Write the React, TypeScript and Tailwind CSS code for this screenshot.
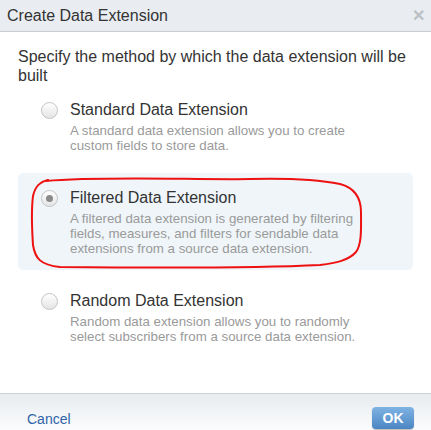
import React from 'react';

type Option = {
  title: string;
  desc: string;
  checked?: boolean;
};

const options: Option[] = [
  {
    title: 'Standard Data Extension',
    desc: 'A standard data extension allows you to create custom fields to store data.',
  },
  {
    title: 'Filtered Data Extension',
    desc: 'A filtered data extension is generated by filtering fields, measures, and filters for sendable data extensions from a source data extension.',
    checked: true,
  },
  {
    title: 'Random Data Extension',
    desc: 'Random data extension allows you to randomly select subscribers from a source data extension.',
  },
];

const Radio = ({ checked }: { checked?: boolean }) => (
  <span className="mt-[2px] flex h-[17px] w-[17px] shrink-0 items-center justify-center rounded-full border border-[#c4c4c4] bg-gradient-to-b from-[#ffffff] to-[#e4e4e4]">
    {checked && <span className="h-[7px] w-[7px] rounded-full bg-[#8a8a8a]" />}
  </span>
);

export default function App() {
  return (
    <div className="relative flex h-[430px] w-[431px] flex-col overflow-hidden bg-white font-['Liberation_Sans',Arial,sans-serif]">
      <div className="flex h-[32px] shrink-0 items-center justify-between border-b border-[#c9ced3] bg-[#e9edf1] pl-[7px] pr-[6px]">
        <span className="text-[16px] text-[#333]">Create Data Extension</span>
        <span className="text-[16px] font-bold leading-none text-[#bcc1c6]">✕</span>
      </div>

      <div className="flex-1 px-[18px] pt-[15px]">
        <p className="text-[16px] leading-[19px] text-[#333]">
          Specify the method by which the data extension will be built
        </p>
        <div className="flex flex-col gap-[6px]">
          {options.map((o) => (
            <div
              key={o.title}
              className={`flex gap-[12px] rounded-[5px] pb-[14px] pl-[23px] pr-[40px] pt-[15px] ${
                o.checked ? 'bg-[#eff5f9]' : ''
              }`}
            >
              <Radio checked={o.checked} />
              <div>
                <div className="text-[16px] leading-[20px] text-[#333]">{o.title}</div>
                <div className="mt-[3px] text-[13.3px] leading-[15px] text-[#9a9a9a]">{o.desc}</div>
              </div>
            </div>
          ))}
        </div>
      </div>

      <div className="flex h-[37px] shrink-0 items-center justify-between border-t border-[#cfd3d7] bg-gradient-to-b from-[#e8ecef] to-[#fbfcfd] pl-[27px] pr-[17px]">
        <span className="mt-[14px] text-[14px] text-[#2f64a8]">Cancel</span>
        <button className="mt-[12px] h-[22px] w-[42px] rounded-[4px] bg-gradient-to-b from-[#7fb3e3] to-[#4b86c3] text-[14px] font-bold text-white shadow-[0_1px_1px_rgba(0,0,0,0.25)]">
          OK
        </button>
      </div>

      <svg className="pointer-events-none absolute inset-0" width="431" height="430" viewBox="0 0 431 430">
        <path
          d="M46 181 C 100 176, 200 180, 250 179 C 290 178, 320 180, 340 184 C 355 188, 361 198, 361 212 C 361 228, 362 244, 356 252 C 348 261, 335 263, 320 265 C 260 268, 160 268, 60 267 C 40 265, 35 258, 33 245 C 32 230, 31 212, 33 196 C 35 187, 39 182, 48 180"
          fill="none"
          stroke="#ee1111"
          strokeWidth="2"
          strokeLinecap="round"
        />
      </svg>
    </div>
  );
}
